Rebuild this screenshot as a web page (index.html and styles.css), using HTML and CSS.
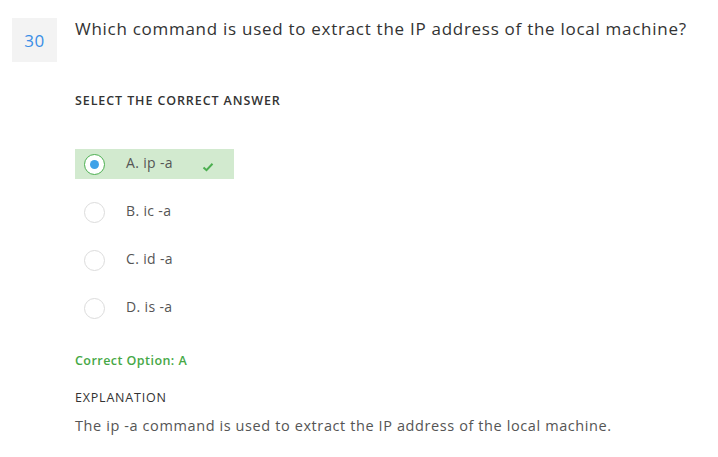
FILE: index.html
```html
<!DOCTYPE html>
<html>
<head>
<meta charset="utf-8">
<link rel="stylesheet" href="styles.css">
</head>
<body>
<div class="question">
  <div class="num">30</div>
  <div class="content">
    <div class="qtext">Which command is used to extract the IP address of the local machine?</div>
    <div class="label select">SELECT THE CORRECT ANSWER</div>
    <div class="options">
      <div class="option correct">
        <span class="radio checked"><span class="dot"></span></span>
        <span class="otext">A. ip -a</span>
        <svg class="check" width="12" height="10" viewBox="0 0 12 10"><path d="M1.5 5.5 L4.5 8.2 L10.5 1.8" fill="none" stroke="#4caf50" stroke-width="2"/></svg>
      </div>
      <div class="option">
        <span class="radio"></span>
        <span class="otext">B. ic -a</span>
      </div>
      <div class="option">
        <span class="radio"></span>
        <span class="otext">C. id -a</span>
      </div>
      <div class="option">
        <span class="radio"></span>
        <span class="otext">D. is -a</span>
      </div>
    </div>
    <div class="answer">Correct Option: A</div>
    <div class="label expl">EXPLANATION</div>
    <div class="etext">The ip -a command is used to extract the IP address of the local machine.</div>
  </div>
</div>
</body>
</html>
```
FILE: styles.css
```css
* { box-sizing: border-box; }
body {
  margin: 0;
  background: #fff;
  font-family: "Open Sans", "Noto Sans", sans-serif;
  color: #333;
}
.question {
  display: flex;
  padding: 18px 0 0 12px;
}
.num {
  width: 45px;
  height: 44px;
  background: #f3f3f3;
  color: #3a8ee6;
  font-size: 17px;
  letter-spacing: 0.6px;
  display: flex;
  align-items: center;
  justify-content: center;
  flex-shrink: 0;
}
.content {
  margin-left: 18px;
  display: flex;
  flex-direction: column;
}
.qtext {
  font-size: 17px;
  letter-spacing: 0.72px;
  line-height: 22px;
  color: #333;
  white-space: nowrap;
}
.label {
  font-size: 12.5px;
  font-weight: 600;
  color: #333;
}
.select {
  margin-top: 54px;
  line-height: 14px;
  letter-spacing: 0.9px;
}
.options {
  margin-top: 41px;
  display: flex;
  flex-direction: column;
  gap: 18px;
}
.option {
  display: flex;
  align-items: center;
  height: 30px;
  width: 159px;
  padding-left: 9px;
}
.option.correct {
  background: #d2eacf;
}
.radio {
  width: 21px;
  height: 21px;
  border-radius: 50%;
  border: 1px solid #dcdcdc;
  background: #fff;
  display: flex;
  align-items: center;
  justify-content: center;
  flex-shrink: 0;
}
.radio.checked {
  border: 1.5px solid #4caf50;
}
.dot {
  width: 9px;
  height: 9px;
  border-radius: 50%;
  background: #3fa2e8;
}
.otext {
  margin-left: 21px;
  font-size: 14px;
  letter-spacing: 0.35px;
  color: #555;
  margin-top: -3px;
}
.check {
  margin-left: 29px;
  margin-top: 6px;
}
.answer {
  margin-top: 30px;
  font-size: 12.5px;
  letter-spacing: 0.45px;
  font-weight: 600;
  color: #46a846;
  line-height: 16px;
}
.expl {
  margin-top: 22px;
  line-height: 14px;
  font-weight: 500;
  letter-spacing: 0.8px;
}
.etext {
  margin-top: 12px;
  font-size: 14.5px;
  letter-spacing: 0.6px;
  color: #555;
  line-height: 18px;
  white-space: nowrap;
}
```
